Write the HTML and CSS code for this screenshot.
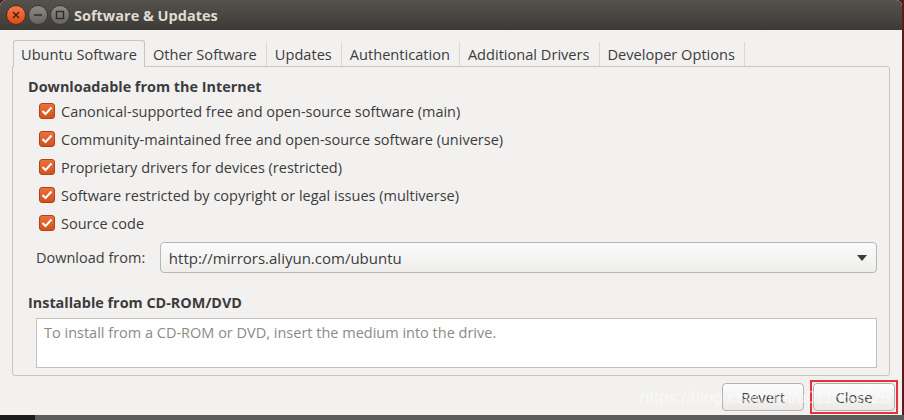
FILE: index.html
```html
<!DOCTYPE html>
<html lang="en">
<head>
    <meta charset="UTF-8">
    <title>Software &amp; Updates</title>
    <link rel="stylesheet" href="styles.css">
</head>
<body>
    <div class="screen">
        <div class="window">
            <div class="titlebar">
                <div class="wm-buttons">
                    <span class="wm-btn close">
                        <svg width="8" height="8" viewBox="0 0 8 8"><path d="M1 1L7 7M7 1L1 7" stroke="#3c1a0e" stroke-width="1.4"/></svg>
                    </span>
                    <span class="wm-btn">
                        <svg width="10" height="8" viewBox="0 0 10 8"><path d="M1 4H9" stroke="#2e2d2a" stroke-width="1.6"/></svg>
                    </span>
                    <span class="wm-btn">
                        <svg width="10" height="10" viewBox="0 0 10 10"><rect x="1.5" y="1.5" width="7" height="7" fill="none" stroke="#2e2d2a" stroke-width="1.4"/></svg>
                    </span>
                </div>
                <div class="title">Software &amp; Updates</div>
            </div>

            <div class="content">
                <div class="tabs">
                    <div class="tab active">Ubuntu Software</div>
                    <div class="tab">Other Software</div>
                    <div class="tab">Updates</div>
                    <div class="tab">Authentication</div>
                    <div class="tab">Additional Drivers</div>
                    <div class="tab">Developer Options</div>
                </div>

                <div class="panel">
                    <div class="section-title">Downloadable from the Internet</div>
                    <div class="checks">
                        <label class="check"><span class="box"><svg width="12" height="10" viewBox="0 0 12 10"><path d="M1.5 5L4.5 8L10.5 1.5" fill="none" stroke="#fff" stroke-width="2"/></svg></span>Canonical-supported free and open-source software (main)</label>
                        <label class="check"><span class="box"><svg width="12" height="10" viewBox="0 0 12 10"><path d="M1.5 5L4.5 8L10.5 1.5" fill="none" stroke="#fff" stroke-width="2"/></svg></span>Community-maintained free and open-source software (universe)</label>
                        <label class="check"><span class="box"><svg width="12" height="10" viewBox="0 0 12 10"><path d="M1.5 5L4.5 8L10.5 1.5" fill="none" stroke="#fff" stroke-width="2"/></svg></span>Proprietary drivers for devices (restricted)</label>
                        <label class="check"><span class="box"><svg width="12" height="10" viewBox="0 0 12 10"><path d="M1.5 5L4.5 8L10.5 1.5" fill="none" stroke="#fff" stroke-width="2"/></svg></span>Software restricted by copyright or legal issues (multiverse)</label>
                        <label class="check"><span class="box"><svg width="12" height="10" viewBox="0 0 12 10"><path d="M1.5 5L4.5 8L10.5 1.5" fill="none" stroke="#fff" stroke-width="2"/></svg></span>Source code</label>
                    </div>

                    <div class="download-row">
                        <span class="download-label">Download from:</span>
                        <div class="combo">
                            <span>http://mirrors.aliyun.com/ubuntu</span>
                            <svg width="10" height="6" viewBox="0 0 10 6"><path d="M0 0H10L5 6Z" fill="#3c3c3c"/></svg>
                        </div>
                    </div>

                    <div class="section-title cd">Installable from CD-ROM/DVD</div>
                    <div class="cd-box">To install from a CD-ROM or DVD, insert the medium into the drive.</div>
                </div>

                <div class="actions">
                    <div class="button">Revert</div>
                    <div class="highlight"><div class="button">Close</div></div>
                    <div class="watermark">https://blog.csdn.net/u011352525</div>
                </div>
            </div>
        </div>
        <div class="panel-strip"></div>
    </div>
</body>
</html>
```

FILE: styles.css
```css
body {
    margin: 0;
    font-family: 'Open Sans', 'Noto Sans', sans-serif;
    background-color: #5c1a1a;
    overflow: hidden;
}
.screen {
    width: 904px;
    height: 420px;
    display: flex;
    flex-direction: column;
    background-color: #5a1b1b;
}
.window {
    width: 902px;
    height: 415px;
    background-color: #f2f1f0;
    display: flex;
    flex-direction: column;
    border-top-right-radius: 6px;
    border-top-left-radius: 6px;
    overflow: hidden;
}
.panel-strip {
    height: 5px;
    background: linear-gradient(to right, #1c1c1c 0, #1c1c1c 35px, #5c5c5c 35px, #5c5c5c 100%);
}
.titlebar {
    height: 30px;
    background: linear-gradient(#55524c, #3c3b37);
    display: flex;
    align-items: center;
    padding-left: 6px;
    flex-shrink: 0;
}
.wm-buttons {
    display: flex;
    gap: 2px;
}
.wm-btn {
    width: 18px;
    height: 18px;
    border-radius: 50%;
    background: linear-gradient(#8c8a85, #66645f);
    border: 1px solid #3a3935;
    display: flex;
    align-items: center;
    justify-content: center;
}
.wm-btn.close {
    background: linear-gradient(#f37a4c, #df4a16);
    border-color: #5d2a14;
}
.title {
    margin-left: 4px;
    color: #dfdbd2;
    font-weight: bold;
    font-size: 14.5px;
}
.content {
    padding: 10px 4px 0 12px;
    flex: 1;
    display: flex;
    flex-direction: column;
}
.tabs {
    display: flex;
    height: 26px;
    padding-left: 1px;
    align-items: flex-end;
    color: #3c3c3c;
    font-size: 14.6px;
}
.tab {
    height: 24px;
    line-height: 24px;
    padding: 0 9px 0 8px;
    border-right: 1px solid #dcdad5;
}
.tab.active {
    height: 26px;
    line-height: 27px;
    padding: 0 7px;
    border: 1px solid #c8c6c0;
    border-bottom: none;
    border-radius: 3px 3px 0 0;
    background-color: #f2f1f0;
    position: relative;
    top: 1px;
}
.panel {
    border: 1px solid #c8c6c0;
    border-radius: 0 3px 3px 3px;
    height: 310px;
    box-sizing: border-box;
    width: 878px;
    padding: 10px 12px 0 15px;
    color: #3c3c3c;
    font-size: 14.5px;
}
.section-title {
    font-weight: bold;
    height: 20px;
    line-height: 20px;
    font-size: 14.4px;
}
.section-title.cd {
    margin-top: 20px;
}
.checks {
    display: flex;
    flex-direction: column;
}
.check {
    height: 28px;
    display: flex;
    align-items: center;
    padding-left: 11px;
}
.box {
    width: 16px;
    height: 16px;
    border-radius: 3px;
    background: linear-gradient(#e8713f, #d4501f);
    border: 1px solid #b24316;
    box-sizing: border-box;
    display: flex;
    align-items: center;
    justify-content: center;
    margin-right: 6px;
}
.download-row {
    display: flex;
    align-items: center;
    margin-top: 5px;
    padding-left: 8px;
}
.download-label {
    width: 124px;
}
.combo {
    width: 718px;
    height: 31px;
    box-sizing: border-box;
    border: 1px solid #b9b7b1;
    border-radius: 4px;
    background: linear-gradient(#fbfbfb, #eeedec);
    display: flex;
    align-items: center;
    justify-content: space-between;
    padding: 0 9px 0 8px;
    font-size: 15px;
}
.cd-box {
    margin: 5px 0 0 8px;
    height: 50px;
    box-sizing: border-box;
    background-color: #ffffff;
    border: 1px solid #c3c1bc;
    padding: 4px 7px;
    color: #8c8a86;
    font-size: 14.5px;
}
.actions {
    display: flex;
    justify-content: flex-end;
    align-items: center;
    gap: 6px;
    padding: 4px 0 0;
    position: relative;
}
.button {
    height: 28px;
    line-height: 27px;
    box-sizing: border-box;
    padding: 0 18px;
    border: 1px solid #b4b2ad;
    border-radius: 4px;
    background: linear-gradient(#fdfdfd, #eceae8);
    color: #3c3c3c;
    font-size: 14.6px;
}
.highlight {
    border: 2px solid #e8323a;
    padding: 1px;
}
.highlight .button {
    width: 82px;
    text-align: center;
}
.watermark {
    position: absolute;
    right: 8px;
    top: 12px;
    color: rgba(255, 255, 255, 0.55);
    font-family: 'Liberation Sans', sans-serif;
    font-size: 17px;
    pointer-events: none;
}
```
